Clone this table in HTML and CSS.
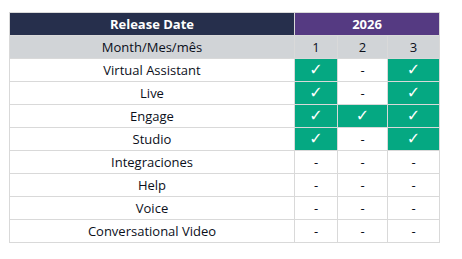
FILE: index.html
```html
<!DOCTYPE html>
<html lang="en">
<head>
    <meta charset="UTF-8">
    <title>Release Date</title>
    <link rel="stylesheet" href="styles.css">
</head>
<body>

    <table class="release">
        <colgroup>
            <col class="col-name">
            <col class="col-1">
            <col class="col-2">
            <col class="col-3">
        </colgroup>
        <tr class="head">
            <th class="head-title">Release Date</th>
            <th class="head-year" colspan="3">2026</th>
        </tr>
        <tr class="sub">
            <td>Month/Mes/mês</td>
            <td>1</td>
            <td>2</td>
            <td>3</td>
        </tr>
        <tr>
            <td>Virtual Assistant</td>
            <td class="yes">✓</td>
            <td>-</td>
            <td class="yes">✓</td>
        </tr>
        <tr>
            <td>Live</td>
            <td class="yes">✓</td>
            <td>-</td>
            <td class="yes">✓</td>
        </tr>
        <tr>
            <td>Engage</td>
            <td class="yes">✓</td>
            <td class="yes">✓</td>
            <td class="yes">✓</td>
        </tr>
        <tr>
            <td>Studio</td>
            <td class="yes">✓</td>
            <td>-</td>
            <td class="yes">✓</td>
        </tr>
        <tr>
            <td>Integraciones</td>
            <td>-</td>
            <td>-</td>
            <td>-</td>
        </tr>
        <tr>
            <td>Help</td>
            <td>-</td>
            <td>-</td>
            <td>-</td>
        </tr>
        <tr>
            <td>Voice</td>
            <td>-</td>
            <td>-</td>
            <td>-</td>
        </tr>
        <tr>
            <td>Conversational Video</td>
            <td>-</td>
            <td>-</td>
            <td>-</td>
        </tr>
    </table>

</body>
</html>
```

FILE: styles.css
```css
body {
    margin: 0;
    padding: 12px 0 0 9px;
    background-color: #ffffff;
    font-family: "Open Sans", Arial, sans-serif;
    font-size: 13px;
    color: #0b0f1a;
}

.release {
    border-collapse: collapse;
    table-layout: fixed;
    width: 430px;
}

.col-name { width: 285px; }
.col-1 { width: 43px; }
.col-2 { width: 50px; }
.col-3 { width: 52px; }

.release th,
.release td {
    border: 1px solid #d9d9d9;
    height: 22px;
    padding: 0;
    text-align: center;
    vertical-align: middle;
    line-height: 22px;
    font-weight: 500;
}

.head th {
    color: #ffffff;
    font-weight: bold;
}

.head-title {
    background-color: #262f4c;
}

.head-year {
    background-color: #553a82;
}

.sub td {
    background-color: #d1d4d7;
}

.yes {
    background-color: #05a882;
    color: #ffffff;
    font-family: "DejaVu Sans", sans-serif;
    font-size: 16px;
}

.release .yes {
    font-weight: bold;
}
```
